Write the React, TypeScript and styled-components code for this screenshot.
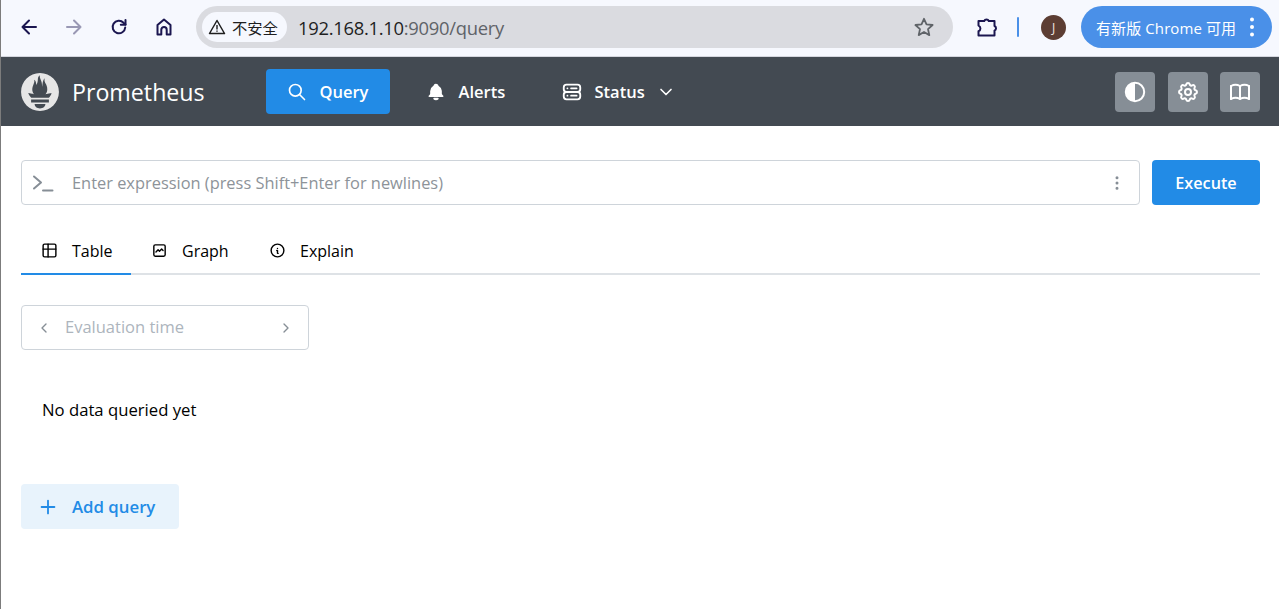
import React from "react";
import styled, { createGlobalStyle } from "styled-components";
import {
  TbSearch, TbBellFilled, TbServer2, TbChevronDown, TbSettings, TbBook,
  TbDotsVertical, TbTable, TbGraph, TbInfoCircle, TbPlus, TbChevronLeft, TbChevronRight,
} from "react-icons/tb";

const Global = createGlobalStyle`
  html, body { margin: 0; padding: 0; height: 100%; background: #fff; overflow: hidden; }
  body { font-family: "Open Sans", "Noto Sans CJK SC", sans-serif; }
  #root { height: 100%; }
  * { box-sizing: border-box; }
`;

const Page = styled.div`
  height: 609px;
  border-left: 1px solid #7c7c7c;
  display: flex;
  flex-direction: column;
`;

const BrowserBar = styled.div`
  height: 57px;
  flex: none;
  background: #f6f8fe;
  border-bottom: 1px solid #d4d6de;
  display: flex;
  align-items: center;
  padding: 0 6px 2px 0;
  color: #1b1650;
`;

const NavIcon = styled.div<{ $dim?: boolean }>`
  width: 45px;
  height: 45px;
  flex: none;
  display: flex;
  align-items: center;
  justify-content: center;
  opacity: ${(p) => (p.$dim ? 0.42 : 1)};
`;

const NavIcons = styled.div`
  display: flex;
  margin-left: 5px;
`;

const Omnibox = styled.div`
  width: 757px;
  height: 42px;
  margin-left: 10px;
  background: #dadbe0;
  border-radius: 21px;
  display: flex;
  align-items: center;
  padding: 0 18px 0 6px;
`;

const SecurityChip = styled.div`
  width: 85px;
  height: 30px;
  border-radius: 15px;
  background: #f6f8fe;
  display: flex;
  align-items: center;
  padding-left: 6px;
  gap: 6px;
  font-size: 15.300px;
  color: #1f1f1f;
`;

const Url = styled.div`
  margin-left: 11px;
  flex: 1;
  font-size: 18.400px;
  color: #5f6368;
  letter-spacing: -0.280px;
  b { font-weight: 400; color: #1f1f1f; }
`;

const ExtSlot = styled.div`
  margin-left: 20px;
  width: 28px;
  display: flex;
  justify-content: center;
`;

const Divider = styled.div`
  width: 2px;
  height: 20px;
  margin-left: 16px;
  background: #4a90e8;
  border-radius: 1px;
`;

const Avatar = styled.div`
  width: 25px;
  height: 25px;
  margin-left: 22px;
  border-radius: 50%;
  background: #5c3d33;
  color: #f0e8e4;
  font-size: 12px;
  display: flex;
  align-items: center;
  justify-content: center;
`;

const UpdatePill = styled.div`
  width: 191px;
  height: 42px;
  margin-left: 15px;
  border-radius: 21px;
  background: #4a90e8;
  color: #fff;
  font-size: 15px;
  display: flex;
  align-items: center;
  padding: 0 17px 0 15px;
  justify-content: space-between;
`;

const UpdateLabel = styled.span`
  letter-spacing: 0.100px;
  white-space: nowrap;
`;

const AppHeader = styled.header`
  height: 69px;
  flex: none;
  background: #434a52;
  display: flex;
  align-items: center;
  padding: 0 19px 0 20px;
  color: #fff;
`;

const Brand = styled.div`
  display: flex;
  align-items: center;
  gap: 13px;
  width: 245px;
  font-size: 23.200px;
  color: #fff;
`;

const NavGroup = styled.nav`
  display: flex;
  align-items: center;
`;

const NavLink = styled.div<{ $active?: boolean; $w: number; $pad: number; $gap: number }>`
  width: ${(p) => p.$w}px;
  height: 45px;
  border-radius: 4px;
  background: ${(p) => (p.$active ? "#228be6" : "transparent")};
  display: flex;
  align-items: center;
  padding-left: ${(p) => p.$pad}px;
  gap: ${(p) => p.$gap}px;
  font-size: 16.500px;
  font-weight: 600;
  svg { flex: none; }
`;

const HeaderActions = styled.div`
  margin-left: auto;
  display: flex;
  gap: 12.500px;
`;

const ActionButton = styled.div`
  width: 40px;
  height: 40px;
  border-radius: 4px;
  background: #868e96;
  display: flex;
  align-items: center;
  justify-content: center;
`;

const Main = styled.main`
  flex: 1;
  padding: 34px 19px 0 20px;
`;

const QueryRow = styled.div`
  display: flex;
  gap: 12px;
`;

const ExpressionBox = styled.div`
  flex: 1;
  height: 45px;
  border: 1px solid #ced4da;
  border-radius: 4px;
  display: flex;
  align-items: center;
  padding: 0 13px 0 10px;
  color: #868e96;
`;

const Placeholder = styled.div`
  flex: 1;
  margin-left: 18px;
  font-size: 16.400px;
  color: #8d9399;
`;

const ExecuteButton = styled.div`
  width: 108px;
  height: 45px;
  border-radius: 4px;
  background: #228be6;
  color: #fff;
  font-size: 16.200px;
  font-weight: 600;
  display: flex;
  align-items: center;
  justify-content: center;
`;

const TabList = styled.div`
  display: flex;
  height: 45px;
  margin-top: 25px;
  border-bottom: 2px solid #dee2e6;
`;

const Tab = styled.div<{ $active?: boolean; $w: number }>`
  width: ${(p) => p.$w}px;
  height: 45px;
  flex: none;
  display: flex;
  align-items: center;
  gap: 14px;
  padding-left: 20px;
  padding-bottom: 2px;
  font-size: 16px;
  color: #000;
  border-bottom: 2px solid ${(p) => (p.$active ? "#228be6" : "transparent")};
`;

const EvalBox = styled.div`
  width: 288px;
  height: 45px;
  margin-top: 30px;
  border: 1px solid #ced4da;
  border-radius: 4px;
  display: flex;
  align-items: center;
  padding: 0 14px;
  color: #868e96;
`;

const EvalText = styled.div`
  flex: 1;
  margin-left: 13px;
  padding-bottom: 2px;
  font-size: 16.500px;
  color: #adb5bd;
`;

const EmptyNote = styled.div`
  margin: 49px 0 0 21px;
  height: 24px;
  line-height: 22px;
  font-size: 16.700px;
  color: #000;
`;

const AddQueryButton = styled.div`
  width: 158px;
  height: 45px;
  margin-top: 61px;
  border-radius: 4px;
  background: #e8f3fc;
  color: #228be6;
  font-size: 16.800px;
  font-weight: 600;
  display: flex;
  align-items: center;
  padding-left: 16px;
  gap: 13px;
`;

const Line = { fill: "none", stroke: "currentColor", strokeWidth: 2, strokeLinecap: "round", strokeLinejoin: "round" } as const;

const PrometheusLogo = () => (
  <svg width="38" height="38" viewBox="0 0 256 257">
    <path
      fill="#e6e6e6"
      d="M128.001.667C57.31.667 0 57.973 0 128.664c0 70.69 57.31 127.998 128.001 127.998S256 199.354 256 128.664C256 57.973 198.69.667 128.001.667zm0 239.56c-20.112 0-36.419-13.435-36.419-30.004h72.838c0 16.569-16.307 30.004-36.419 30.004zm60.153-39.94H67.842V178.47h120.314v21.816h-.002zm-.432-33.045H68.185c-.398-.458-.804-.91-1.188-1.375-12.315-14.954-15.216-22.76-18.032-30.716-.048-.262 14.933 3.06 25.556 5.45 0 0 5.466 1.265 13.458 2.722-7.673-8.994-12.23-20.428-12.23-32.116 0-25.658 19.68-48.079 12.58-66.201 6.91.562 14.3 14.583 14.8 36.505 7.346-10.152 10.42-28.69 10.42-40.056 0-11.769 7.755-25.44 15.512-25.907-6.915 11.396 1.79 21.165 9.53 45.4 2.902 9.103 2.532 24.423 4.772 34.138.744-20.178 4.213-49.62 17.014-59.784-5.647 12.8.836 28.818 5.27 36.518 7.154 12.424 11.49 21.836 11.49 39.638 0 11.936-4.407 23.173-11.84 31.958 8.452-1.586 14.289-3.016 14.289-3.016l27.45-5.355c.002-.002-3.987 16.401-19.314 32.197z"
    />
  </svg>
);

const HalfCircle = () => (
  <svg width="24" height="24" viewBox="0 0 24 24">
    <circle cx="12" cy="12" r="9.200" fill="none" stroke="#fff" strokeWidth="2" />
    <path d="M12 3a9 9 0 0 0 0 18z" fill="#fff" />
  </svg>
);

const ArrowLeft = () => (
  <svg width="20" height="20" viewBox="0 0 20 20" {...Line}>
    <path d="M17 10H3.500M10 3.500 3.500 10l6.500 6.500" />
  </svg>
);
const ArrowRight = () => (
  <svg width="20" height="20" viewBox="0 0 20 20" {...Line}>
    <path d="M3 10h13.500M10 3.500l6.500 6.500-6.500 6.500" />
  </svg>
);
const Reload = () => (
  <svg width="20" height="20" viewBox="0 0 20 20" {...Line}>
    <path d="M16.200 10.500a6.300 6.300 0 1 1-1.700-4.800L16.500 7.500" />
    <path d="M16.500 3v4.700h-4.700" />
  </svg>
);
const Home = () => (
  <svg width="20" height="20" viewBox="0 0 20 20" {...Line}>
    <path d="M3.500 17.500V8l6.500-5.500L16.500 8v9.500h-3.800v-4.800a2.700 2.700 0 0 0-5.400 0v4.800z" />
  </svg>
);
const Warning = () => (
  <svg width="18" height="18" viewBox="0 0 18 18">
    <path d="M9 2.500 16.500 15.500h-15z" fill="none" stroke="#1f1f1f" strokeWidth="1.500" strokeLinejoin="round" />
    <path d="M9 7v4.500M9 12.500v1.300" stroke="#1f1f1f" strokeWidth="1.400" />
  </svg>
);
const Star = () => (
  <svg width="22" height="22" viewBox="0 0 22 22">
    <path d="M11 2.800l2.500 5.600 6.100.6-4.600 4.100 1.300 6-5.300-3.100-5.300 3.100 1.300-6L2.400 9l6.100-.6z" fill="none" stroke="#5f6368" strokeWidth="1.800" strokeLinejoin="round" />
  </svg>
);
const Puzzle = () => (
  <svg width="24" height="24" viewBox="0 0 24 24">
    <path
      d="M3.500 6H9.200a2.500 2.500 0 0 1 4.600 0H19.500V11a2.500 2.500 0 0 1 0 4.600V20.500H3.500V16.200a3 3 0 0 0 0-5.600z"
      fill="none"
      stroke="#1b1650"
      strokeWidth="2"
      strokeLinejoin="round"
    />
  </svg>
);
const Kebab = () => (
  <svg width="6" height="20" viewBox="0 0 6 20">
    <circle cx="3" cy="2.500" r="2" fill="#fff" />
    <circle cx="3" cy="10" r="2" fill="#fff" />
    <circle cx="3" cy="17.500" r="2" fill="#fff" />
  </svg>
);
const TerminalPrompt = () => (
  <svg width="22" height="18" viewBox="0 0 22 18" {...Line}>
    <path d="M2 2.500l7 6-7 6" />
    <path d="M11 16.500h9.500" />
  </svg>
);

export default function App() {
  return (
    <>
      <Global />
      <Page>
        <BrowserBar>
          <NavIcons>
            <NavIcon><ArrowLeft /></NavIcon>
            <NavIcon $dim><ArrowRight /></NavIcon>
            <NavIcon><Reload /></NavIcon>
            <NavIcon><Home /></NavIcon>
          </NavIcons>
          <Omnibox>
            <SecurityChip><Warning />不安全</SecurityChip>
            <Url><b>192.168.1.10</b>:9090/query</Url>
            <Star />
          </Omnibox>
          <ExtSlot><Puzzle /></ExtSlot>
          <Divider />
          <Avatar>J</Avatar>
          <UpdatePill><UpdateLabel>有新版 Chrome 可用</UpdateLabel><Kebab /></UpdatePill>
        </BrowserBar>
        <AppHeader>
          <Brand><PrometheusLogo />Prometheus</Brand>
          <NavGroup>
            <NavLink $active $w={124} $pad={21} $gap={12.5}><TbSearch size={20} />Query</NavLink>
            <NavLink $w={139} $pad={36} $gap={12.5}><TbBellFilled size={20} />Alerts</NavLink>
            <NavLink $w={160} $pad={32} $gap={11.5}><TbServer2 size={22} />Status<TbChevronDown size={20} /></NavLink>
          </NavGroup>
          <HeaderActions>
            <ActionButton><HalfCircle /></ActionButton>
            <ActionButton><TbSettings size={24} /></ActionButton>
            <ActionButton><TbBook size={24} /></ActionButton>
          </HeaderActions>
        </AppHeader>
        <Main>
          <QueryRow>
            <ExpressionBox>
              <TerminalPrompt />
              <Placeholder>Enter expression (press Shift+Enter for newlines)</Placeholder>
              <TbDotsVertical size={18} />
            </ExpressionBox>
            <ExecuteButton>Execute</ExecuteButton>
          </QueryRow>
          <TabList>
            <Tab $active $w={110}><TbTable size={17} />Table</Tab>
            <Tab $w={118}><TbGraph size={17} />Graph</Tab>
            <Tab $w={120}><TbInfoCircle size={17} />Explain</Tab>
          </TabList>
          <EvalBox>
            <TbChevronLeft size={16} />
            <EvalText>Evaluation time</EvalText>
            <TbChevronRight size={16} />
          </EvalBox>
          <EmptyNote>No data queried yet</EmptyNote>
          <AddQueryButton><TbPlus size={22} />Add query</AddQueryButton>
        </Main>
      </Page>
    </>
  );
}
